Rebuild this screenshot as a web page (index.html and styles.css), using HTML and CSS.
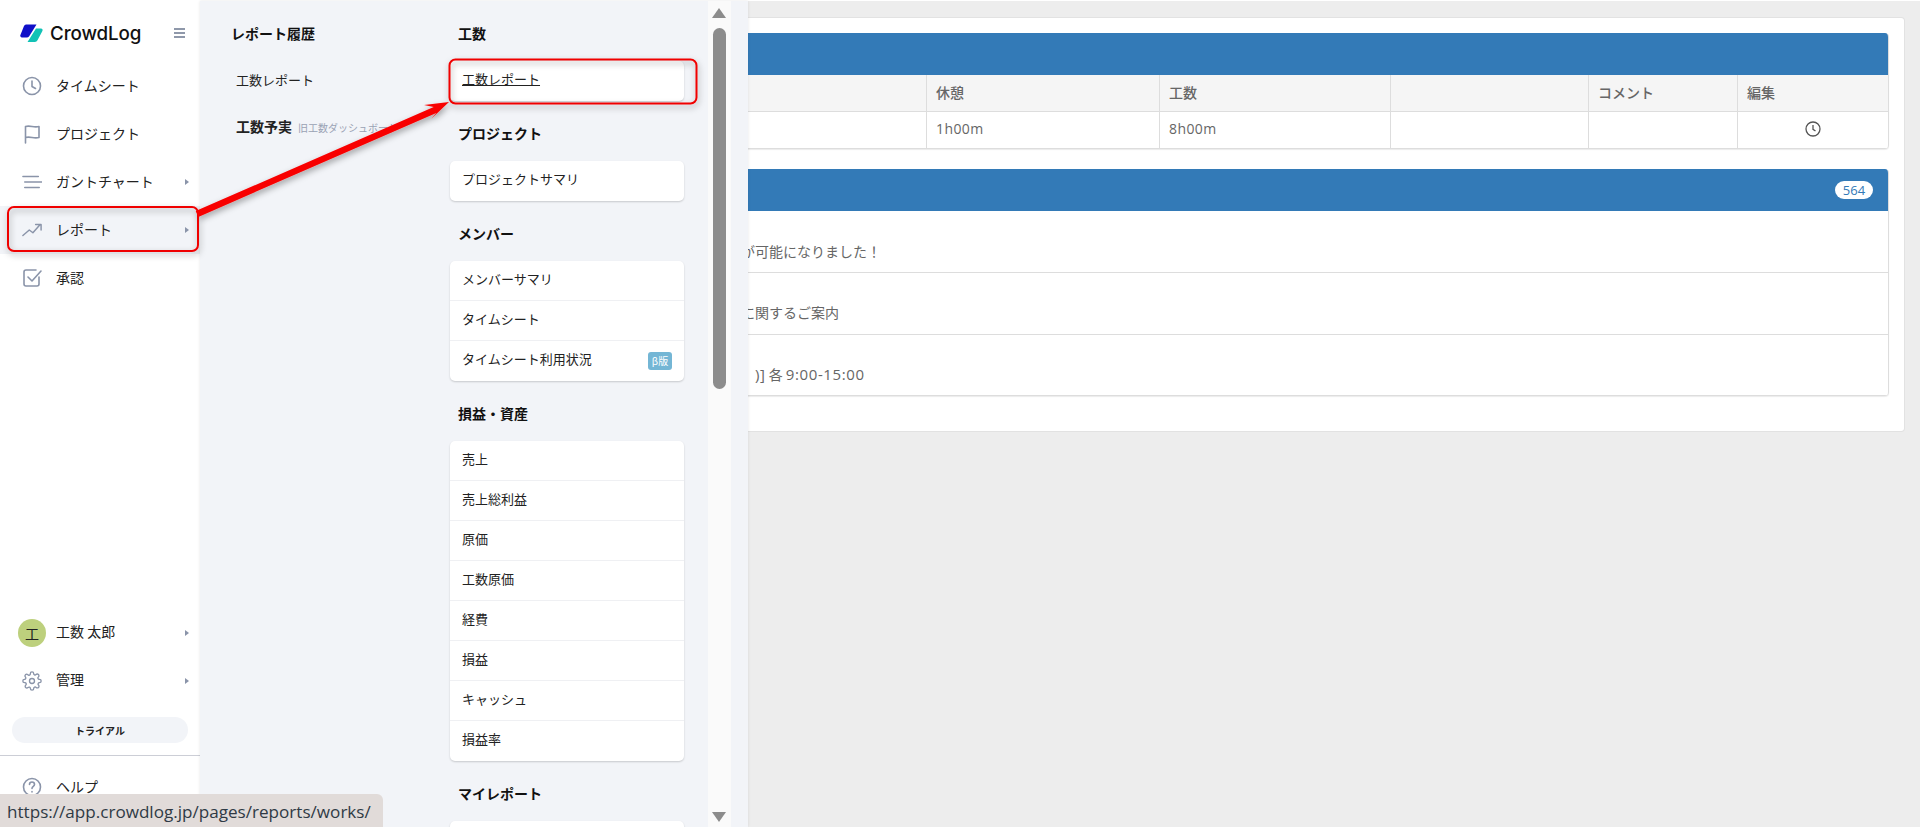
FILE: index.html
```html
<!DOCTYPE html>
<html lang="ja">
<head>
<meta charset="utf-8">
<title>CrowdLog</title>
<link rel="stylesheet" href="styles.css">
</head>
<body>
<div class="app">
  <aside class="sidebar">
    <div class="logo-row">
      <svg class="logo-mark" viewBox="0 0 23 19" width="23" height="19"><path d="M6 .5h10.500L9.200 12.200a3 3 0 0 1-2.500 1.300H2A1.800 1.800 0 0 1 .5 10.800L4 2a3 3 0 0 1 2-1.500z" fill="#1010c8"/><path d="M16 4.500h5a1.600 1.600 0 0 1 1.400 2.400l-4.900 9.400a3 3 0 0 1-2.600 1.700H7.500z" fill="#12c2b6"/></svg>
      <span class="logo-text">CrowdLog</span>
      <span class="burger"><i></i><i></i><i></i></span>
    </div>
    <nav class="nav">
      <a class="nav-item"><svg class="ico" viewBox="0 0 20 20"><circle cx="10" cy="10" r="8.500"/><path d="M10 5v5.500l3.500 2"/></svg><span class="nav-label">タイムシート</span></a>
      <a class="nav-item"><svg class="ico" viewBox="0 0 20 20"><path d="M3.500 19V2.500c5-1.500 8 1.500 13.500 0v11c-5.500 1.500-8.500-1.500-13.500 0"/></svg><span class="nav-label">プロジェクト</span></a>
      <a class="nav-item has-sub"><svg class="ico ico-wide" viewBox="0 0 22 20"><path d="M1 4h17M3 10h19M3 16h16"/></svg><span class="nav-label">ガントチャート</span></a>
      <a class="nav-item has-sub is-active"><svg class="ico ico-wide" viewBox="0 0 22 20"><path d="M1 16l7-6 4 3 8-9M15 4h6v6"/></svg><span class="nav-label">レポート</span></a>
      <a class="nav-item"><svg class="ico" viewBox="0 0 20 20"><path d="M17 9v7a2 2 0 0 1-2 2H4a2 2 0 0 1-2-2V4a2 2 0 0 1 2-2h10"/><path d="M6 9l4 4 9-10"/></svg><span class="nav-label">承認</span></a>
    </nav>
    <div class="side-bottom">
      <a class="nav-item has-sub lifted"><span class="avatar">工</span><span class="nav-label">工数 太郎</span></a>
      <a class="nav-item has-sub lifted"><svg class="ico" viewBox="0 0 24 24"><circle cx="12" cy="12" r="3"/><path d="M19.400 15a1.650 1.650 0 0 0 .33 1.820l.06.06a2 2 0 1 1-2.830 2.830l-.06-.06a1.650 1.650 0 0 0-2.820 1.170V21a2 2 0 0 1-4 0v-.09A1.650 1.650 0 0 0 7.280 19.800l-.06.06a2 2 0 1 1-2.830-2.830l.06-.06A1.650 1.650 0 0 0 3.280 14H3a2 2 0 0 1 0-4h.09A1.650 1.650 0 0 0 4.200 7.280l-.06-.06a2 2 0 1 1 2.830-2.830l.06.06A1.650 1.650 0 0 0 10 3.280V3a2 2 0 0 1 4 0v.09a1.650 1.650 0 0 0 2.820 1.170l.06-.06a2 2 0 1 1 2.830 2.830l-.06.06A1.650 1.650 0 0 0 20.720 10H21a2 2 0 0 1 0 4h-.09a1.650 1.650 0 0 0-1.510 1z"/></svg><span class="nav-label">管理</span></a>
      <div class="trial">トライアル</div>
      <div class="help-wrap">
        <a class="nav-item"><svg class="ico" viewBox="0 0 20 20"><circle cx="10" cy="10" r="8.500"/><path d="M7.500 7.500a2.500 2.500 0 0 1 5 0c0 1.800-2.500 2-2.500 4M10 14.500v.5"/></svg><span class="nav-label">ヘルプ</span></a>
      </div>
    </div>
  </aside>

  <main class="main">
    <section class="card">
      <div class="panel">
        <div class="panel-head"></div>
        <table class="table">
          <colgroup><col class="c-first"><col class="c-rest"><col class="c-work"><col class="c-blank"><col class="c-comment"><col></colgroup>
          <thead><tr><th></th><th>休憩</th><th>工数</th><th></th><th>コメント</th><th>編集</th></tr></thead>
          <tbody><tr><td></td><td>1h00m</td><td>8h00m</td><td></td><td></td><td class="edit"><svg viewBox="0 0 16 16" width="16" height="16"><circle cx="8" cy="8" r="7"/><path d="M8 4v4.300l2.500 1.700"/></svg></td></tr></tbody>
        </table>
      </div>
      <div class="panel panel-news">
        <div class="panel-head"><span class="count">564</span></div>
        <ul class="news">
          <li class="news-a">が可能になりました！</li>
          <li class="news-b">に関するご案内</li>
          <li class="news-c"><span class="latin">)]</span> 各 <span class="latin">9:00-15:00</span></li>
        </ul>
      </div>
    </section>
  </main>

  <div class="flyout">
    <div class="fly-left">
      <h3 class="fly-title">レポート履歴</h3>
      <a class="plain-link">工数レポート</a>
      <a class="plain-link strong">工数予実<small>旧工数ダッシュボード</small></a>
    </div>
    <div class="fly-right">
      <h3 class="fly-title">工数</h3>
      <div class="menu"><a class="menu-item underlined">工数レポート</a></div>
      <h3 class="fly-title">プロジェクト</h3>
      <div class="menu"><a class="menu-item">プロジェクトサマリ</a></div>
      <h3 class="fly-title">メンバー</h3>
      <div class="menu">
        <a class="menu-item">メンバーサマリ</a>
        <a class="menu-item">タイムシート</a>
        <a class="menu-item">タイムシート利用状況<span class="beta">β版</span></a>
      </div>
      <h3 class="fly-title">損益・資産</h3>
      <div class="menu">
        <a class="menu-item">売上</a>
        <a class="menu-item">売上総利益</a>
        <a class="menu-item">原価</a>
        <a class="menu-item">工数原価</a>
        <a class="menu-item">経費</a>
        <a class="menu-item">損益</a>
        <a class="menu-item">キャッシュ</a>
        <a class="menu-item">損益率</a>
      </div>
      <h3 class="fly-title">マイレポート</h3>
      <div class="menu"><a class="menu-item">&nbsp;</a></div>
    </div>
    <div class="scrollbar">
      <span class="arrow-up"></span>
      <span class="thumb"></span>
      <span class="arrow-down"></span>
    </div>
  </div>

  <svg class="annot" viewBox="0 0 760 300" width="760" height="300">
    <defs><filter id="sh" x="-10%" y="-30%" width="120%" height="160%"><feDropShadow dx="1" dy="3" stdDeviation="3" flood-color="#000" flood-opacity=".35"/></filter></defs>
    <g filter="url(#sh)">
      <rect class="frame" x="8" y="207" width="190" height="44" rx="6"/>
      <rect class="frame" x="449.500" y="59.500" width="247" height="44" rx="6"/>
      <path d="M195.700 211.100L433.700 107.100 424 105 449 102 431 119 436.300 112.900 198.300 216.900z" fill="#f80000"/>
    </g>
  </svg>
  <div class="status">https://app.crowdlog.jp/pages/reports/works/</div>
</div>
</body>
</html>
```

FILE: styles.css
```css
* { box-sizing: border-box; }
html, body { height: 100%; }
body {
  margin: 0;
  background: #fff;
  font-family: "Noto Sans CJK JP", "Noto Sans", sans-serif;
  font-size: 14px;
  color: #222;
  overflow: hidden;
}
a { color: inherit; text-decoration: none; }
.app {
  position: relative;
  display: flex;
  height: 827px;
  overflow: hidden;
}

/* sidebar */
.sidebar {
  width: 200px;
  flex: none;
  display: flex;
  flex-direction: column;
  background: #fff;
  overflow: hidden;
}
.logo-row {
  height: 62px;
  display: flex;
  align-items: center;
  padding: 4px 15px 0 20px;
  gap: 7px;
}
.logo-mark { flex: none; }
.logo-text {
  font-family: Inter, sans-serif;
  font-weight: 500;
  font-size: 18.800px;
  color: #111;
  letter-spacing: -.1px;
}
.burger {
  margin-left: auto;
  display: flex;
  flex-direction: column;
  gap: 2px;
  width: 11px;
}
.burger i { height: 2px; background: #8f98aa; display: block; }
.nav-item {
  position: relative;
  display: flex;
  align-items: center;
  height: 48px;
  padding-left: 22px;
  gap: 14px;
  font-size: 14px;
}
.nav-label { padding-bottom: 2px; }
.lifted .nav-label { padding-bottom: 4px; }
.ico {
  width: 20px;
  height: 20px;
  flex: none;
  fill: none;
  stroke: #8a94a9;
  stroke-width: 1.600;
  stroke-linecap: round;
  stroke-linejoin: round;
}
.has-sub::after {
  content: "";
  position: absolute;
  right: 11px;
  top: 21px;
  border-left: 4px solid #8a94a9;
  border-top: 3.500px solid transparent;
  border-bottom: 3.500px solid transparent;
}
.is-active { background: #f2f4f8; }
.avatar {
  width: 28px;
  height: 28px;
  margin: 0 -4px 0 -4px;
  flex: none;
  border-radius: 50%;
  background: #bdd07d;
  display: flex;
  align-items: center;
  justify-content: center;
  font-size: 14px;
  color: #222;
}
.side-bottom { margin-top: auto; padding-bottom: 16px; }
.trial {
  height: 26px;
  margin: 12px 12px;
  border-radius: 13px;
  background: #f2f4f8;
  display: flex;
  align-items: center;
  justify-content: center;
  font-size: 10px;
  font-weight: 700;
  color: #222;
}
.help-wrap { border-top: 1px solid #ccced6; padding-top: 7px; }

/* main */
.main {
  flex: 1;
  background: #ededed;
  padding: 18px 16px 0 16px;
  margin-top: 1px;
  min-width: 0;
}
.card {
  background: #fff;
  border-radius: 3px;
  box-shadow: 0 0 0 1px #e2e2e2;
  padding: 15px 15px 36px;
  height: 413px;
  margin-top: -1px;
}
.panel {
  border-radius: 4px;
  box-shadow: 0 1px 1px rgba(0,0,0,.08);
  overflow: hidden;
  border-right: 1px solid #ddd;
}
.panel-news { margin-top: 20px; }
.panel-head {
  height: 42px;
  margin-right: -1px;
  background: #337ab7;
  display: flex;
  align-items: center;
  justify-content: flex-end;
  padding-right: 16px;
}
.count {
  background: #fff;
  color: #337ab7;
  font-family: "Open Sans", sans-serif;
  font-weight: 500;
  font-size: 13px;
  line-height: 18px;
  height: 18px;
  width: 38px;
  text-align: center;
  border-radius: 9px;
}
.table {
  width: 100%;
  table-layout: fixed;
  border-collapse: collapse;
  color: #666;
  font-size: 14px;
}
.c-first { width: 695px; }
.c-rest { width: 233px; }
.c-work { width: 231px; }
.c-blank { width: 198px; }
.c-comment { width: 149px; }
.table th, .table td {
  border: 1px solid #ddd;
  border-top: 0;
  height: 36.500px;
  padding: 0 9px 2px;
  text-align: left;
  font-weight: 500;
}
.table th:last-child, .table td:last-child { border-right: 0; }
.table th { background: #f5f5f5; }
.table td {
  font-family: "Open Sans", sans-serif;
  font-size: 14px;
  font-weight: 400;
  letter-spacing: .4px;
}
.edit svg {
  display: block;
  margin: 0 auto;
  fill: none;
  stroke: #555;
  stroke-width: 1.300;
}
.news { list-style: none; margin: 0; padding: 0; color: #666; font-size: 14px; }
.news li {
  height: 61.500px;
  padding-top: 29px;
  line-height: 20px;
  border-bottom: 1px solid #ddd;
}
.news .news-a { padding-left: 510px; height: 62.500px; padding-top: 30px; }
.news-b { padding-left: 510px; }
.news-c { padding-left: 524px; }
.latin { font-family: "Open Sans", sans-serif; font-size: 15px; letter-spacing: .6px; }

/* flyout */
.flyout {
  position: absolute;
  left: 200px;
  top: 1px;
  bottom: 0;
  width: 548px;
  display: flex;
  background: #f2f4f8;
  box-shadow: 0 0 3px rgba(0,0,0,.1);
  overflow: hidden;
}
.fly-left { width: 250px; padding: 22px 0 0 31px; flex: none; }
.fly-right { width: 234px; flex: none; padding-top: 22px; }
.fly-title {
  margin: 22px 0 18px;
  padding-left: 8px;
  font-size: 14px;
  line-height: 20px;
  font-weight: 700;
  color: #111;
}
.fly-right .fly-title:first-child, .fly-left .fly-title:first-child { margin-top: 0; }
.fly-left .fly-title { padding-left: 0; margin-bottom: 15px; }
.plain-link {
  display: block;
  padding-left: 5px;
  height: 46px;
  line-height: 46px;
  font-size: 13px;
  margin-top: -1px;
}
.plain-link + .plain-link { margin-top: 0; }
.plain-link.strong { font-weight: 700; font-size: 14px; white-space: nowrap; }
.plain-link small {
  font-size: 10px;
  font-weight: 400;
  color: #9aa2b4;
  margin-left: 6px;
}
.menu {
  background: #fff;
  border-radius: 5px;
  box-shadow: 0 1px 2px rgba(0,0,0,.18);
  overflow: hidden;
}
.menu-item {
  display: flex;
  align-items: center;
  justify-content: space-between;
  height: 40px;
  padding: 0 12px 5px;
  font-size: 13px;
  color: #222;
  border-bottom: 1px solid #eff0f3;
}
.menu-item:last-child { border-bottom: 0; }
.underlined { text-decoration: underline; }
.beta {
  width: 24px;
  height: 18px;
  margin-top: 5px;
  border-radius: 3px;
  background: #74b6d5;
  color: #fff;
  font-size: 10px;
  text-align: center;
  line-height: 18px;
}
.scrollbar {
  position: absolute;
  left: 508px;
  top: 0;
  bottom: 0;
  width: 23px;
  background: #fafafa;
}
.thumb {
  position: absolute;
  left: 5px;
  top: 27px;
  width: 13px;
  height: 361px;
  border-radius: 7px;
  background: #8c8c8c;
}
.arrow-up, .arrow-down {
  position: absolute;
  left: 4px;
  width: 0;
  height: 0;
  border-left: 7.500px solid transparent;
  border-right: 7.500px solid transparent;
}
.arrow-up { top: 7px; border-bottom: 10px solid #8c8c8c; }
.arrow-down { bottom: 5px; border-top: 10px solid #8c8c8c; }

/* overlays */
.annot { position: absolute; left: 0; top: 0; pointer-events: none; }
.frame { fill: none; stroke: #f00000; stroke-width: 2; }
.status {
  position: absolute;
  left: 0;
  bottom: 0;
  width: 383px;
  height: 33px;
  padding: 1px 0 0 7px;
  background: #e1dbd9;
  border-top-right-radius: 6px;
  font-family: "Open Sans", sans-serif;
  font-size: 17.100px;
  line-height: 33px;
  color: #2f3a45;
  white-space: nowrap;
}
```
